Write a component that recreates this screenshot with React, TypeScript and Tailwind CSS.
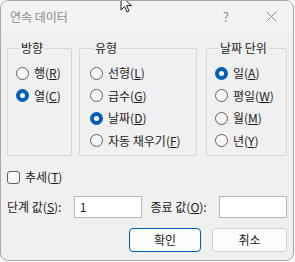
import React from "react";

const font = { fontFamily: '"Noto Sans CJK KR", "Noto Sans", sans-serif' };

const Radio = ({ checked, label, hot }: { checked?: boolean; label: string; hot: string }) => (
  <div className="flex h-[22.5px] items-center gap-[5px]">
    {checked ? (
      <span className="flex h-[13px] w-[13px] items-center justify-center rounded-full bg-[#005fb8]">
        <span className="h-[5px] w-[5px] rounded-full bg-white" />
      </span>
    ) : (
      <span className="h-[13px] w-[13px] rounded-full border border-[#5f5f5f] bg-[#f7f7f7]" />
    )}
    <span>
      {label}(<u>{hot}</u>)
    </span>
  </div>
);

const Group = ({ title, width, pad, children }: { title: string; width: string; pad: string; children: React.ReactNode }) => (
  <fieldset className={`h-[115px] rounded-[2px] border border-[#d6d6d6] ${width} ${pad}`}>
    <legend className="ml-[3px] px-[2px] text-[12px] leading-[14px]">{title}</legend>
    <div className="pt-[7px]">{children}</div>
  </fieldset>
);

export default function App() {
  return (
    <div className="h-[262px] w-[295px] bg-[#f9f9f9] text-[12px] text-[#1a1a1a]" style={font}>
      <div className="relative flex h-[261px] w-[294px] flex-col overflow-hidden rounded-[8px] border border-[#a8a8a8] bg-[#f0f0f0]">
        <div className="flex h-[31px] items-center bg-[#f3f3f3] pl-[9px] text-[#8c8c8c]">
          <span className="text-[12px]">연속 데이터</span>
          <span className="ml-auto mr-[37px] text-[13px]">?</span>
          <svg width="11" height="11" viewBox="0 0 11 11" className="mr-[16px]">
            <path d="M0.5 0.5 L10.5 10.5 M10.5 0.5 L0.5 10.5" stroke="#8c8c8c" strokeWidth="1" />
          </svg>
        </div>

        <div className="flex flex-col px-[6px] pt-[9px]">
          <div className="flex">
            <Group title="방향" width="w-[66px]" pad="pl-[8px]">
              <Radio label="행" hot="R" />
              <Radio checked label="열" hot="C" />
            </Group>
            <div className="ml-[7px]">
              <Group title="유형" width="w-[118px]" pad="pl-[10px]">
                <Radio label="선형" hot="L" />
                <Radio label="급수" hot="G" />
                <Radio checked label="날짜" hot="D" />
                <Radio label="자동 채우기" hot="F" />
              </Group>
            </div>
            <div className="ml-[9px]">
              <Group title="날짜 단위" width="w-[81px]" pad="pl-[8px]">
                <Radio checked label="일" hot="A" />
                <Radio label="평일" hot="W" />
                <Radio label="월" hot="M" />
                <Radio label="년" hot="Y" />
              </Group>
            </div>
          </div>

          <div className="mt-[13px] flex h-[16px] items-center gap-[5px]">
            <span className="h-[13px] w-[13px] rounded-[3px] border border-[#5f5f5f] bg-[#f7f7f7]" />
            <span>
              추세(<u>T</u>)
            </span>
          </div>

          <div className="mt-[11px] flex h-[22px] items-center">
            <span className="w-[67px]">
              단계 값(<u>S</u>):
            </span>
            <div className="flex h-[22px] w-[68px] items-center border border-[#b4b4b4] bg-white pl-[5px]">1</div>
            <span className="ml-[9px] w-[69px]">
              종료 값(<u>O</u>):
            </span>
            <div className="h-[22px] w-[68px] border border-[#b4b4b4] bg-white" />
          </div>

          <div className="mt-[10px] flex justify-end gap-[11px]">
            <button className="h-[24px] w-[72px] rounded-[4px] border border-[#005fb8] bg-[#fdfdfd] text-[12px]">
              확인
            </button>
            <button className="h-[24px] w-[75px] rounded-[4px] border border-[#d0d0d0] bg-[#fdfdfd] text-[12px]">
              취소
            </button>
          </div>
        </div>

        <svg width="14" height="20" viewBox="0 0 14 20" className="absolute left-[119px] top-[-6px]">
          <path d="M1 1 L1 15 L4.5 11.5 L7 17 L9 16 L6.6 10.6 L11.5 10.6 Z" fill="white" stroke="#222" strokeWidth="1" strokeLinejoin="round" />
        </svg>
      </div>
    </div>
  );
}
